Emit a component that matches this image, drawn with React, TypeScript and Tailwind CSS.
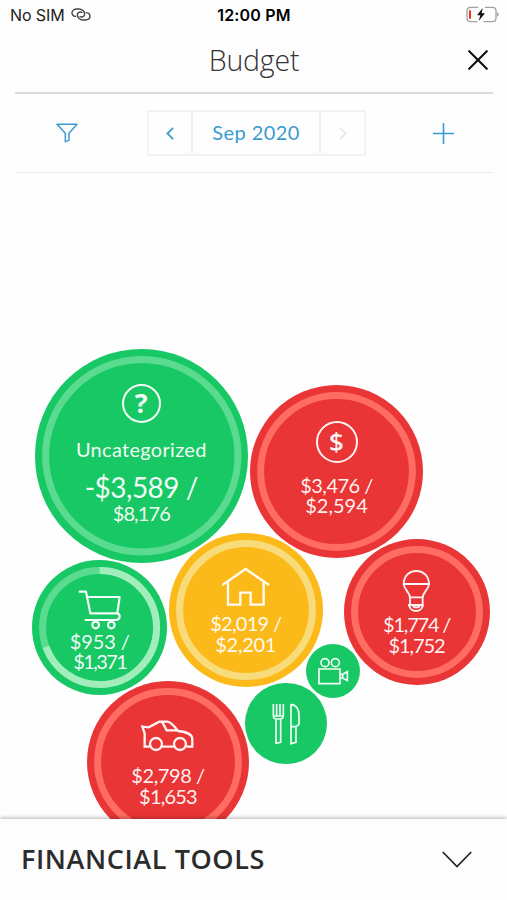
import type { ReactNode } from 'react';

type Tone = 'green' | 'red' | 'amber';

interface Bubble {
  id: string;
  cx: number;
  cy: number;
  r: number;
  tone: Tone;
  ring?: boolean;
  progress?: number;
  icon: ReactNode;
  body?: ReactNode;
  layout: string;
}

const TONES: Record<Tone, { fill: string; track: string; bar: string }> = {
  green: { fill: '#18c864', track: '#5bdb90', bar: '#a1edbb' },
  red: { fill: '#ea3536', track: '#ff6c63', bar: '#ff6c63' },
  amber: { fill: '#fcba1a', track: '#f8dc7c', bar: '#f8dc7c' },
};

const stroke = { fill: 'none', stroke: 'currentColor', strokeWidth: 7 };

const CartIcon = () => (
  <svg className="h-10 w-[43.3px]" viewBox="0 0 130 120" {...stroke} strokeWidth={6.5} strokeLinejoin="round">
    <path d="M2 5H24L37 70H118L125 21H28" />
    <path d="M118 70C129 74 127 89 114 90H20" />
    <circle cx="53" cy="105" r="10" />
    <circle cx="100" cy="105" r="10" />
  </svg>
);

const HomeIcon = () => (
  <svg className="h-10 w-[49.3px]" viewBox="0 0 148 120" {...stroke}>
    <path d="M4 54L74 6L144 54" />
    <path d="M21 44V113H58V77H89V113H128V44" />
  </svg>
);

const BulbIcon = () => (
  <svg className="h-[45px] w-[30.7px]" viewBox="0 0 92 135" {...stroke} strokeWidth={5.5}>
    <path d="M8 48C8 25 24 9 46 9S84 25 84 48Z" />
    <path d="M8 48C9 66 27 72 27 90V111M65 111V90C65 72 83 66 84 48M27 88H65M21 111H67" />
    <path d="M24 111C26 123 36 129 45 129S64 123 66 111M36 113C38 120 54 120 56 113" />
  </svg>
);

const CameraIcon = () => (
  <svg className="h-[28.7px] w-8" viewBox="0 0 96 86" {...stroke} strokeWidth={5}>
    <circle cx="24" cy="17" r="12" />
    <circle cx="55" cy="17" r="12" />
    <path d="M6 36H69V80H6ZM69 52H77L91 44V71L77 63H69M77 52V63" />
  </svg>
);

const CutleryIcon = () => (
  <svg className="h-[43.3px] w-[30px]" viewBox="0 0 90 130" {...stroke} strokeWidth={5}>
    <path d="M7 6V42Q7 49 15 51V124L29 121V51Q37 49 37 42V6M17 6V42M27 6V42M7 42H37M15 51H29" />
    <path d="M60 8C76 8 84 22 84 38V67L75 74V121L60 125ZM60 74H75" />
  </svg>
);

const CarIcon = () => (
  <svg className="h-[34px] w-[55.3px]" viewBox="0 0 166 102" {...stroke}>
    <path d="M29 83H14V43L7 23L26 25L58 8H82C96 10 105 25 114 36C136 38 157 45 157 61V83H139M67 83H101" />
    <path d="M66 8L80 34H114" />
    <circle cx="48" cy="75" r="18" />
    <circle cx="120" cy="75" r="18" />
  </svg>
);

interface AmountProps {
  spent: string;
  total: string;
  spentClass?: string;
  totalClass?: string;
}

const Amount = ({ spent, total, spentClass = 'tracking-[-0.5px]', totalClass = 'tracking-normal' }: AmountProps) => (
  <div className="text-center text-[20px] leading-[20.6px] whitespace-nowrap">
    <p className={spentClass}>{spent} /</p>
    <p className={totalClass}>{total}</p>
  </div>
);

const BUBBLES: Bubble[] = [
  {
    id: 'uncategorized', cx: 141.3, cy: 456, r: 106.8, tone: 'green', ring: true,
    layout: 'pt-[34.5px]',
    icon: (
      <span className="flex size-[39px] items-center justify-center rounded-full border-[2.4px] border-current pb-px font-['Open_Sans'] text-[27px] leading-none font-bold">
        ?
      </span>
    ),
    body: (
      <div className="mt-[14px] text-center whitespace-nowrap">
        <p className="text-[20px] leading-6 tracking-[0.3px]">Uncategorized</p>
        <p className="mt-[10px] text-[28px] leading-[32px] tracking-[-0.5px]">-$3,589 /</p>
        <p className="text-[20px] leading-5 tracking-[-0.9px]">$8,176</p>
      </div>
    ),
  },
  {
    id: 'income', cx: 336.5, cy: 471.2, r: 86.5, tone: 'red', ring: true,
    layout: 'pt-[36px] gap-[12px]',
    icon: (
      <span className="flex size-[42px] items-center justify-center rounded-full border-2 border-current pb-px font-['Open_Sans'] text-[26px] leading-none font-semibold">
        $
      </span>
    ),
    body: <Amount spent="$3,476" total="$2,594" />,
  },
  {
    id: 'shopping', cx: 99.7, cy: 627.5, r: 67.6, tone: 'green', ring: true, progress: 953 / 1371,
    layout: 'pt-[30px] gap-px',
    icon: <CartIcon />,
    body: <Amount spent="$953" total="$1,371" spentClass="tracking-[-0.1px]" totalClass="tracking-[-1.6px]" />,
  },
  {
    id: 'home', cx: 245.7, cy: 610, r: 77, tone: 'amber', ring: true,
    layout: 'pt-[34px] gap-[6px]',
    icon: <HomeIcon />,
    body: <Amount spent="$2,019" total="$2,201" spentClass="tracking-[-0.7px]" totalClass="tracking-[-0.3px]" />,
  },
  {
    id: 'utilities', cx: 416.6, cy: 612.2, r: 73, tone: 'red', ring: true,
    layout: 'pt-[29px] gap-px',
    icon: <BulbIcon />,
    body: <Amount spent="$1,774" total="$1,752" spentClass="tracking-[-1.2px]" totalClass="tracking-[-1.1px]" />,
  },
  {
    id: 'entertainment', cx: 332.8, cy: 671.2, r: 27.2, tone: 'green',
    layout: 'justify-center',
    icon: <CameraIcon />,
  },
  {
    id: 'food', cx: 286, cy: 723.3, r: 40.6, tone: 'green',
    layout: 'justify-center',
    icon: <CutleryIcon />,
  },
  {
    id: 'auto', cx: 168, cy: 762, r: 81, tone: 'red', ring: true,
    layout: 'pt-[38px] gap-[12px]',
    icon: <CarIcon />,
    body: <Amount spent="$2,798" total="$1,653" spentClass="tracking-[-0.4px]" totalClass="tracking-[-0.8px]" />,
  },
];

// Bubble centres are in page coordinates, the chart starts below the header.
const CHART_TOP = 174;

function BudgetBubble({ bubble }: { bubble: Bubble }) {
  const { cx, cy, r, tone, ring, progress, icon, body, layout } = bubble;
  const colors = TONES[tone];
  const ringRadius = r - 10.6;
  return (
    <div
      className={`absolute flex flex-col items-center rounded-full text-white/95 ${layout}`}
      style={{ left: cx - r, top: cy - r - CHART_TOP, width: r * 2, height: r * 2, backgroundColor: colors.fill }}
    >
      {ring && (
        <svg className="absolute inset-0 size-full -rotate-90" viewBox={`0 0 ${r * 2} ${r * 2}`} fill="none" strokeWidth="7">
          <circle cx={r} cy={r} r={ringRadius} stroke={colors.track} />
          {progress !== undefined && (
            <circle cx={r} cy={r} r={ringRadius} stroke={colors.bar} pathLength={1} strokeDasharray={`${progress} 1`} />
          )}
        </svg>
      )}
      {icon}
      {body}
    </div>
  );
}

function StatusBar() {
  return (
    <div className="grid h-[29px] grid-cols-3 items-center px-[9px] font-['Inter'] text-[#222]">
      <div className="flex items-center gap-[6px] pl-px text-[16px]">
        <span className="tracking-[-0.1px]">No SIM</span>
        <svg className="h-[13px] w-5" viewBox="0 0 60 39" fill="none" stroke="#444" strokeWidth="4.2" strokeLinecap="round">
          <path d="M14 25C6 24 3 19 3 14C3 7 10 3 18 3H24C33 3 41 10 41 18C41 25 34 29 27 26" />
          <path d="M46 14C54 15 57 20 57 25C57 32 50 36 42 36H36C27 36 19 29 19 21C19 14 26 10 33 13" />
        </svg>
      </div>
      <span className="pl-px text-center text-[16px] font-semibold tracking-[0.2px] whitespace-nowrap text-black">12:00 PM</span>
      <svg className="-mr-px h-[17px] w-[33px] justify-self-end" viewBox="0 0 99 51" fill="none">
        <path d="M37 4H14Q3 4 3 15V36Q3 47 14 47H34M57 4H79Q90 4 90 15V36Q90 47 79 47H52" stroke="#a2a2a2" strokeWidth="4" />
        <path d="M93 19Q98 20 98 25T93 32Z" fill="#a2a2a2" />
        <rect x="9" y="13" width="6" height="25" fill="#f0301f" />
        <path d="M50 6L33 28H43L38 45L57 22H47Z" fill="#111" />
      </svg>
    </div>
  );
}

export default function App() {
  return (
    <div className="flex h-[900px] w-full flex-col overflow-hidden bg-[#fefefe]">
      <StatusBar />

      <header className="mr-[14px] ml-[15px] grid h-[65px] grid-cols-[1fr_auto_1fr] items-center border-b-2 border-[#dadada]">
        <h1 className="col-start-2 -mt-px font-['Open_Sans'] text-[28.5px] leading-none font-light tracking-[-0.2px] text-[#333]">Budget</h1>
        <svg className="mr-[5px] -mt-px size-5 justify-self-end" viewBox="0 0 20 20" fill="none" stroke="#111" strokeWidth="2.1" strokeLinecap="round">
          <path d="M1.2 1.2L18.8 18.8M18.8 1.2L1.2 18.8" />
        </svg>
      </header>

      {/* Month picker */}
      <div className="mr-[14px] ml-[15px] flex h-[79px] items-center justify-between border-b border-[#e8ecef] pr-[39px] pl-[41px] text-[#3b9bd0]">
        <svg className="size-[22px]" viewBox="0 0 66 66" fill="none" stroke="currentColor" strokeWidth="4.5" strokeLinejoin="round">
          <path d="M3 7H63L39 34V55L28 59V34Z" />
        </svg>
        <div className="ml-[2px] flex h-[46px] w-[219px] divide-x-2 divide-[#f0f3f4] border-2 border-[#f0f3f4]">
          <span className="flex w-[44px] items-center justify-center">
            <svg className="h-[13px] w-2" viewBox="0 0 8 13" fill="none" stroke="currentColor" strokeWidth="1.8">
              <path d="M7.2 0.8L1.4 6.5L7.2 12.2" />
            </svg>
          </span>
          <span className="flex flex-1 items-center justify-center pb-[3px] font-['Lato'] text-[20px] tracking-[0.4px]">Sep 2020</span>
          <span className="flex w-[43px] items-center justify-center text-[#e0e3e5]">
            <svg className="h-[13px] w-2" viewBox="0 0 8 13" fill="none" stroke="currentColor" strokeWidth="1.4">
              <path d="M0.8 0.8L6.6 6.5L0.8 12.2" />
            </svg>
          </span>
        </div>
        <svg className="size-[21px]" viewBox="0 0 21 21" fill="none" stroke="currentColor" strokeWidth="1.6">
          <path d="M10.5 0V21M0 10.5H21" />
        </svg>
      </div>

      <main className="relative mt-px flex-1 overflow-hidden font-['Lato']">
        {BUBBLES.map((bubble) => (
          <BudgetBubble key={bubble.id} bubble={bubble} />
        ))}
      </main>

      <footer className="relative flex h-[81px] items-center justify-between bg-[#fdfdfd] pr-[35px] pl-[21px] shadow-[0_-1px_4px_rgba(0,0,0,0.3)]">
        <h2 className="-mt-[2px] font-['Open_Sans'] text-[27px] leading-none font-semibold tracking-[0.6px] text-[#2c2c2c]">FINANCIAL TOOLS</h2>
        <svg className="h-[17px] w-[30px]" viewBox="0 0 30 17" fill="none" stroke="#222" strokeWidth="1.7">
          <path d="M0.8 1L15 15.5L29.2 1" />
        </svg>
      </footer>
    </div>
  );
}
